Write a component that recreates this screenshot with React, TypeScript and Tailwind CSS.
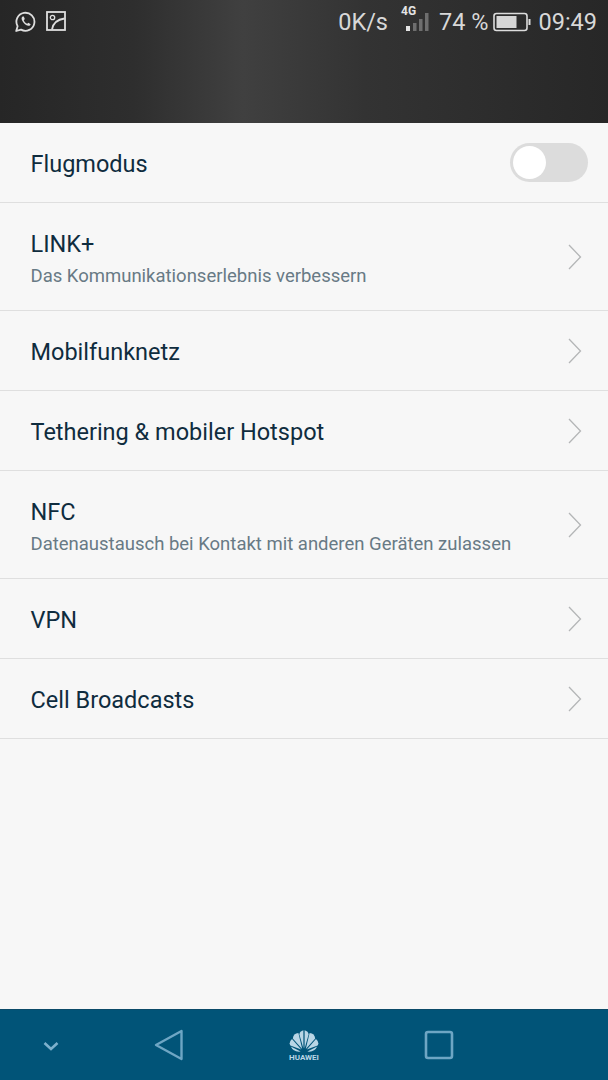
import React from 'react'

interface RowProps {
  title: string
  subtitle?: string
  tall?: boolean
}

const Chevron = () => (
  <svg width="16" height="26" viewBox="0 0 16 26" fill="none" stroke="#b4b6b7" strokeWidth="1.3">
    <path d="M2 1 L13.5 13 L2 25" />
  </svg>
)

const Row: React.FC<RowProps> = ({ title, subtitle, tall }) => (
  <div className={`flex items-center justify-between pl-[30.5px] pr-[25px] border-b border-[#dfdfdf] ${tall ? 'h-[108px]' : 'h-[80px]'}`}>
    <div className={tall ? 'pt-[4px]' : 'pt-[2px]'}>
      <div className="text-[23.5px] leading-[30px] text-[#0f2c3e]">{title}</div>
      {subtitle && <div className="text-[18.5px] leading-[26px] mt-[4px] text-[#687a85]">{subtitle}</div>}
    </div>
    <Chevron />
  </div>
)

const StatusBar = () => (
  <div className="h-[123px] bg-[linear-gradient(90deg,#262626_0%,#2e2e2e_22%,#404040_40%,#333333_60%,#272727_100%)] flex items-start justify-between pl-[15px] pr-[11px] pt-[8px] text-[#d8d8d8]">
    <div className="flex items-center gap-[10px] h-[26px]">
      <svg width="21" height="21" viewBox="0 0 21 21" fill="none" stroke="#dedede" strokeWidth="1.8">
        <path d="M1.2 20 L2.6 15.2 A9 9 0 1 1 6 18.6 Z" strokeLinejoin="round" />
        <path d="M7.6 5.6 C6.4 6.4 6.2 8 7.4 10 C8.8 12.6 11 14.4 13.2 14.8 C14.4 15 15.4 14.2 15.6 13.2 L13.4 11.8 L12.2 12.8 C10.8 12.2 9.4 10.8 8.8 9.2 L9.8 8 L8.8 5.6 Z" fill="#dedede" stroke="none" />
      </svg>
      <svg width="20" height="20" viewBox="0 0 20 20" fill="none" stroke="#dedede" strokeWidth="1.8">
        <rect x="1" y="1" width="18" height="18" />
        <circle cx="6.5" cy="6.5" r="2.2" strokeWidth="1.3" />
        <path d="M6 18.5 C7 12.5 11 8.5 18.5 7.5" />
      </svg>
    </div>
    <div className="flex items-center h-[28px] text-[23.5px] leading-[28px] whitespace-nowrap">
      <span>0K/s</span>
      <div className="relative ml-[15px] w-[27px] h-[28px]">
        <span className="absolute left-[-2px] top-[-4px] text-[12px] leading-[14px] font-bold text-[#e4e4e4]">4G</span>
        <svg className="absolute left-0 top-0" width="27" height="28" viewBox="0 0 27 28">
          <rect x="3" y="18" width="4" height="5" fill="#e4e4e4" />
          <rect x="10" y="15" width="3.5" height="8" fill="#6e6e6e" />
          <rect x="16" y="11" width="3.5" height="12" fill="#6e6e6e" />
          <rect x="22" y="5" width="3.5" height="18" fill="#6e6e6e" />
        </svg>
      </div>
      <span className="ml-[9px]">74 %</span>
      <svg className="ml-[5px]" width="38" height="20" viewBox="0 0 38 20" fill="none">
        <rect x="1" y="1.5" width="33" height="17" rx="2.5" stroke="#dcdcdc" strokeWidth="1.6" />
        <rect x="3.5" y="4" width="20" height="12" fill="#d6d6d6" />
        <rect x="35.5" y="7" width="2" height="6" fill="#dcdcdc" />
      </svg>
      <span className="ml-[7px]">09:49</span>
    </div>
  </div>
)

const HuaweiLogo = () => (
  <div className="flex flex-col items-center w-[32px]">
    <svg width="30" height="23" viewBox="0 0 30 23" fill="#b9d6e6">
      <path d="M14.4 18.5 L10.4 4.5 Q10.6 1.2 14.4 0.2 Z" />
      <path d="M15.6 18.5 L19.6 4.5 Q19.4 1.2 15.6 0.2 Z" />
      <path d="M13.2 19 L9.4 3 Q4.4 3.4 3.8 8.4 Z" />
      <path d="M16.8 19 L20.6 3 Q25.6 3.4 26.2 8.4 Z" />
      <path d="M12.2 19.6 L3 9 Q-0.6 12.2 1.4 15.6 Z" />
      <path d="M17.8 19.6 L27 9 Q30.6 12.2 28.6 15.6 Z" />
      <path d="M11.6 21.6 L1.8 16.6 Q4.6 22.6 11.6 21.6 Z" />
      <path d="M18.4 21.6 L28.2 16.6 Q25.4 22.6 18.4 21.6 Z" />
    </svg>
    <span className="text-[8px] leading-[8px] font-bold text-[#b9d6e6] mt-[1px]">HUAWEI</span>
  </div>
)

const NavBar = () => (
  <div className="mt-auto h-[71px] bg-[#015478] border-t border-[#0b4a68] relative flex items-center">
    <svg className="absolute left-[43px] top-[31px]" width="16" height="11" viewBox="0 0 16 11" fill="none" stroke="#7db1cd" strokeWidth="2.6">
      <path d="M1.5 2 L8 8 L14.5 2" />
    </svg>
    <svg className="absolute left-[154px] top-[19px]" width="30" height="32" viewBox="0 0 30 32" fill="none" stroke="#6ea6c4" strokeWidth="2.4" strokeLinejoin="round">
      <path d="M27.5 2 L2 16 L27.5 30 Z" />
    </svg>
    <div className="absolute left-[288px] top-[20px]">
      <HuaweiLogo />
    </div>
    <svg className="absolute left-[424px] top-[20px]" width="30" height="30" viewBox="0 0 30 30" fill="none" stroke="#6ea6c4" strokeWidth="2.6">
      <rect x="2" y="2" width="26" height="26" rx="2" />
    </svg>
  </div>
)

export default function App() {
  return (
    <div className="w-[608px] h-[1080px] flex flex-col bg-[#f7f7f7] overflow-hidden font-['Roboto',sans-serif]">
      <StatusBar />
      <div className="flex items-center justify-between pl-[30.5px] pr-[20px] h-[80px] border-b border-[#dfdfdf]">
        <div className="pt-[2px] text-[23.5px] leading-[30px] text-[#0f2c3e]">Flugmodus</div>
        <div className="w-[78px] h-[39px] rounded-full bg-[#dcdcdc] flex items-center pl-[3px]">
          <div className="w-[33px] h-[33px] rounded-full bg-white" />
        </div>
      </div>
      <Row tall title="LINK+" subtitle="Das Kommunikationserlebnis verbessern" />
      <Row title="Mobilfunknetz" />
      <Row title="Tethering & mobiler Hotspot" />
      <Row tall title="NFC" subtitle="Datenaustausch bei Kontakt mit anderen Geräten zulassen" />
      <Row title="VPN" />
      <Row title="Cell Broadcasts" />
      <NavBar />
    </div>
  )
}
